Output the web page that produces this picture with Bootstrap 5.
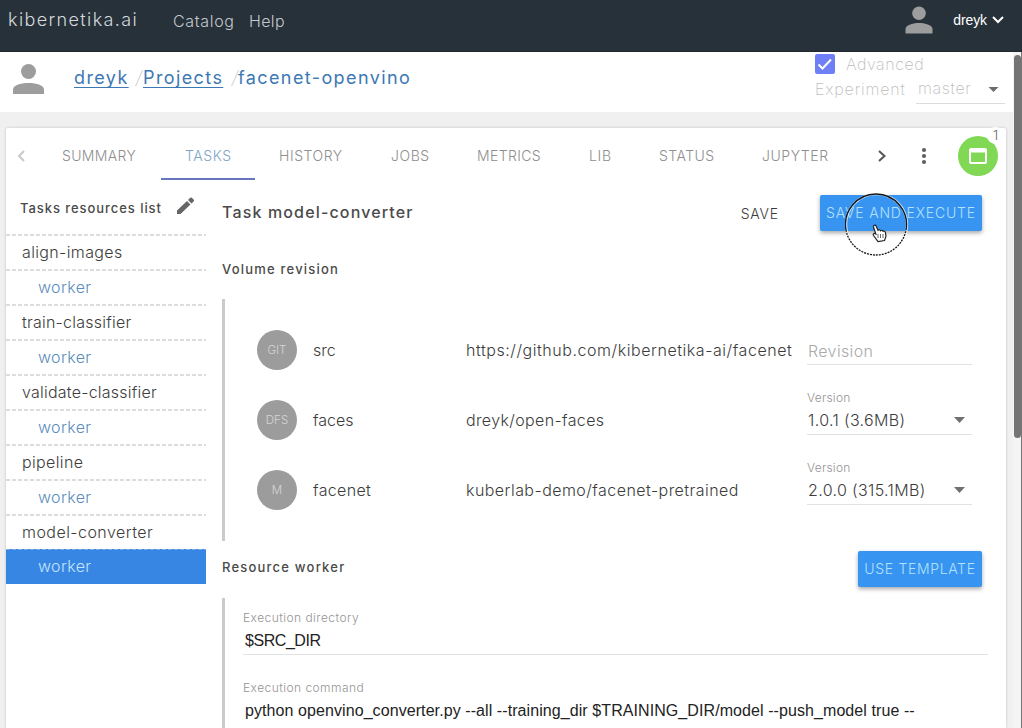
<!DOCTYPE html>
<html lang="en">
<head>
<meta charset="utf-8">
<meta name="viewport" content="width=device-width, initial-scale=1">
<title>kibernetika.ai</title>
<link rel="stylesheet" href="https://cdn.jsdelivr.net/npm/bootstrap@5.3.0/dist/css/bootstrap.min.css">
<style>
html,body{height:728px;overflow:hidden}
body{background:#f0f0f0;font:300 16px/20px "Inter",sans-serif;color:#3c3c3c}
.t0{letter-spacing:0}.t2{letter-spacing:.23px}.t3{letter-spacing:.36px}.t4{letter-spacing:.45px}.t5{letter-spacing:.55px}.t6{letter-spacing:.66px}.t8{letter-spacing:.82px}.t12{letter-spacing:1.4px}
svg{display:block;flex:none}
.topbar{height:52px;background:#27313a;color:#d5d9dc;padding:0 17px 0 8px;border-bottom:1px solid #202930}
.brandname{font-size:18px;letter-spacing:1.38px;width:165px;line-height:39px;height:51px}
.toplink{line-height:42px;height:51px;color:#c3c8cc}
.username{font:400 14px/20px "Liberation Sans",Arial,sans-serif;color:#fff;letter-spacing:-.1px}
.subhead{height:60px;background:#fff}
.crumbs{font-size:18px;line-height:22px;font-weight:400;color:#3c78b4}
.crumbs a{color:inherit;text-decoration:underline;text-decoration-thickness:1px;text-underline-offset:3px;text-decoration-skip-ink:none}
.crumbs i{font-weight:200;font-style:normal;color:#c4c4c4;width:9px;display:inline-block;transform:skewX(-10deg)}
.advanced{color:#bdbdbd;margin-left:815px;width:191px;font-weight:200}
.checkmark{width:20px;height:20px;background:#6f7ff5;border-radius:2px}
.branch{width:89px;height:28px;border-bottom:1px solid #dcdcdc;padding:0 6px 0 2px}
.panel{margin:16px 16px 0 6px;background:#fff;height:600px;border-radius:2px 2px 0 0;box-shadow:0 0 3px rgba(0,0,0,.2);overflow:visible}
.tabbar{height:52px;font-size:14px;line-height:20px;color:#8e8e8e}
.tabbar .tab{height:52px;padding:18px 0 0 24px;border-bottom:2px solid transparent}
.tabbar .tab.on{color:#7fa6c6;border-color:#6675bd}
.alertbtn{width:40px;height:40px;border-radius:50%;background:#80d855}
.notice{top:-9px;right:-6px;width:17px;height:17px;border-radius:50%;background:#fff;font-size:13px;line-height:17px;color:#666}
.side{width:200px}
.sidehead{height:54px;font-size:13px;font-weight:500;color:#4a4a4a;letter-spacing:.94px;padding:0 0 0 14px}
.res,.wrk{height:35px;line-height:36px;background:repeating-linear-gradient(90deg,#dcdcdc 0 4px,transparent 4px 6px) 0 0/100% 2px no-repeat;padding-left:16px}
.wrk{padding-left:32px;color:#5a8dbb}
.wrk.sel{background:repeating-linear-gradient(90deg,#79aee8 0 4px,#3886e4 4px 6px) 0 0/100% 1px no-repeat #3886e4;border-top:1px solid #fff;background-clip:padding-box;line-height:34px;color:#c3e4fb;margin-top:-1px;height:36px}
.main{width:767px;margin-left:16px;height:548px;overflow:hidden}
.heading{font-weight:500;letter-spacing:1.15px;color:#4a4a4a}
.subheading{font-weight:500;font-size:13px;line-height:20px;color:#4a4a4a;letter-spacing:1.21px}
.raised{height:36px;padding:0;line-height:34px;font-size:14px;font-weight:300;background:#3794f1;color:#b4e1fb;border:0;border-radius:2px;box-shadow:0 2px 4px rgba(0,0,0,.35)}
.raised:hover{background:#3794f1;color:#b4e1fb}
.rail{border-left:3px solid #cbcbcb}
.vol{height:70px}
.dot{width:40px;height:40px;border-radius:50%;background:#9c9c9c;color:#d6d6d6;font-size:11.5px;flex:none;margin:0 16px 0 32px}
.vname{width:153px;flex:none}.vpath{width:341px;flex:none;white-space:nowrap}
.pick{width:165px;height:50px;border-bottom:1px solid #e2e2e2;flex:none;margin-top:-20px}
.tag{font-size:12px;line-height:16px;color:#949494}
.entry{width:745px;height:45px;border-bottom:1px solid #e2e2e2;margin-bottom:25px}
.entry .val{display:block;font:400 16px/20px "Liberation Sans",Arial,sans-serif;color:#222;padding:5px 0 0 2px;white-space:nowrap}
.scroller{right:0;top:52px;width:9px;height:676px;background:#f4f4f4;border-right:1px solid #777}
.thumb{width:7px;height:383px;margin:3px 0 0 1px;border-radius:4px;background:#747474}
.pointer{left:845px;top:193px;pointer-events:none}
</style>
</head>
<body>
<header class="topbar d-flex align-items-start">
  <div class="brandname">kibernetika.ai</div>
  <a class="toplink text-decoration-none t6" style="width:76px">Catalog</a>
  <a class="toplink text-decoration-none t3">Help</a>
  <div class="d-flex align-items-center ms-auto" style="height:40px">
    <svg width="28" height="28" viewBox="0 0 28 28" fill="#9d9d9d"><circle cx="14" cy="7.3" r="6.8"/><path d="M.5 27.5V23C.5 19.5 7 17 14 17s13.500 2.500 13.500 6v4.500z"/></svg>
    <span class="username ms-3 ps-1">dreyk</span>
    <svg class="ms-1" width="14" height="10" viewBox="0 0 14 10" fill="none" stroke="#fff" stroke-width="2"><path d="M2 2l5 5 5-5"/></svg>
  </div>
</header>
<section class="subhead d-flex position-relative">
  <svg style="margin:12px 0 0 13px" width="31" height="31" viewBox="0 0 31 31" fill="#9d9d9d"><circle cx="15.500" cy="7.500" r="7.500"/><path d="M0 30v-4.500C0 21.500 7 19 15.500 19S31 21.500 31 25.500V30z"/></svg>
  <nav class="crumbs d-flex" style="margin:15px 0 0 30px"><a class="t12" style="width:54px">dreyk</a><i style="margin-left:6px">/</i><a class="t12" style="width:80px">Projects</a><i style="margin-left:7px">/</i><span class="t12" style="margin-left:-1px">facenet-openvino</span></nav>
  <div class="advanced position-absolute top-0 start-0">
    <div class="d-flex align-items-center" style="height:24px"><span class="checkmark"><svg width="20" height="20" viewBox="0 0 20 20" fill="none" stroke="#fff" stroke-width="2"><path d="M3.500 10.500l4 4 8.500-9"/></svg></span><span class="t5" style="margin-left:11px">Advanced</span></div>
    <div class="d-flex"><span class="t8" style="width:101px;line-height:26px">Experiment</span><span class="branch d-flex align-items-center justify-content-between t6"><span style="margin-top:-3px">master</span><svg width="11" height="7" fill="#6c6c6c"><path d="M.5 1h10l-5 5z"/></svg></span></div>
  </div>
</section>
<main class="panel">
  <nav class="tabbar d-flex">
    <svg style="margin:21px 8px 0 11px" width="8" height="14" fill="none" stroke="#c8c8c8" stroke-width="2"><path d="M7 2L2 7l5 5"/></svg>
    <span class="tab t3" style="width:122px;margin-left:5px">SUMMARY</span>
    <span class="tab on t5" style="width:94px;margin-left:1px">TASKS</span>
    <span class="tab t5" style="width:112px">HISTORY</span>
    <span class="tab t5" style="width:86px">JOBS</span>
    <span class="tab t3" style="width:112px">METRICS</span>
    <span class="tab t6" style="width:70px">LIB</span>
    <span class="tab t4" style="width:103px">STATUS</span>
    <span class="tab t5" style="width:113px">JUPYTER</span>
    <svg style="margin:21px 0 0 26px" width="10" height="14" fill="none" stroke="#555" stroke-width="2"><path d="M2 2l5.500 5L2 12"/></svg>
    <svg style="margin:19px 0 0 34px" width="6" height="18" fill="#606060"><circle cx="3" cy="3" r="2.100"/><circle cx="3" cy="9" r="2.100"/><circle cx="3" cy="15" r="2.100"/></svg>
    <span class="alertbtn position-relative" style="margin:8px 0 0 31px"><svg style="margin:12px 0 0 11px" width="18" height="16" fill="none" stroke="#fff" stroke-width="2"><rect x="1" y="1" width="16" height="14" rx="1"/><path d="M1 3h16" stroke-width="3"/></svg><span class="notice position-absolute text-center">1</span></span>
  </nav>
  <div class="d-flex">
    <aside class="side">
      <div class="sidehead d-flex"><span style="line-height:56px;width:156px">Tasks resources list</span><svg style="margin-top:17px" width="19" height="18" viewBox="0 0 19 18" fill="#666"><path d="M1 17v-3.500L11 4l3.500 3.500L4.500 17zM12 3l2.200-2.200q.8-.7 1.600 0l2 2q.7.700 0 1.400L15.500 6.500z"/></svg></div>
      <div class="res t3">align-images</div><div class="wrk t3">worker</div>
      <div class="res t2">train-classifier</div><div class="wrk t3">worker</div>
      <div class="res t2">validate-classifier</div><div class="wrk t3">worker</div>
      <div class="res t3">pipeline</div><div class="wrk t3">worker</div>
      <div class="res t4">model-converter</div><div class="wrk sel t3">worker</div>
    </aside>
    <section class="main">
      <div class="d-flex align-items-start" style="height:79px;padding-top:15px">
        <h1 class="heading fs-6 m-0" style="line-height:34px">Task model-converter</h1>
        <span class="ms-auto t8" style="font-size:14px;line-height:37px;margin-right:41px">SAVE</span>
        <button class="btn raised t8" style="width:162px;margin-right:7px;line-height:36px">SAVE AND EXECUTE</button>
      </div>
      <h2 class="subheading m-0">Volume revision</h2>
      <div class="rail" style="height:242px;margin-top:20px;padding-top:16px">
        <div class="vol d-flex align-items-center"><span class="dot d-flex align-items-center justify-content-center">GIT</span><span class="vname t0">src</span><span class="vpath t5">https://github.com/kibernetika-ai/facenet</span><div class="pick" style="padding:26px 0 0 1px"><span class="t3" style="color:#aaa">Revision</span></div></div>
        <div class="vol d-flex align-items-center"><span class="dot d-flex align-items-center justify-content-center">DFS</span><span class="vname t0">faces</span><span class="vpath t3">dreyk/open-faces</span><div class="pick"><div class="tag t2" style="padding-top:5px">Version</div><div class="d-flex align-items-center justify-content-between t3" style="padding:4px 7px 0 1px">1.0.1 (3.6MB)<svg width="11" height="6" fill="#707070"><path d="M0 0h11L5.500 6z"/></svg></div></div></div>
        <div class="vol d-flex align-items-center"><span class="dot d-flex align-items-center justify-content-center">M</span><span class="vname t3">facenet</span><span class="vpath t4">kuberlab-demo/facenet-pretrained</span><div class="pick"><div class="tag t2" style="padding-top:5px">Version</div><div class="d-flex align-items-center justify-content-between t3" style="padding:4px 7px 0 1px">2.0.0 (315.1MB)<svg width="11" height="6" fill="#707070"><path d="M0 0h11L5.500 6z"/></svg></div></div></div>
      </div>
      <div class="d-flex justify-content-between" style="height:57px;padding-top:10px">
        <h2 class="subheading m-0" style="padding-top:6px">Resource worker</h2>
        <button class="btn raised t6" style="width:124px;margin-right:7px;line-height:36px">USE TEMPLATE</button>
      </div>
      <div class="rail" style="height:130px;padding:12px 0 0 18px">
        <div class="entry"><span class="tag t4 d-block">Execution directory</span><span class="val" style="letter-spacing:-.45px">$SRC_DIR</span></div>
        <div class="entry m-0 border-0"><span class="tag t4 d-block">Execution command</span><span class="val" style="letter-spacing:.08px">python openvino_converter.py --all --training_dir $TRAINING_DIR/model --push_model true --</span></div>
      </div>
    </section>
  </div>
</main>
<div class="scroller position-absolute"><div class="thumb"></div></div>
<svg class="pointer position-absolute" width="64" height="64" viewBox="0 0 64 64" fill="none"><circle cx="31.500" cy="31.500" r="30.500" stroke="#fff" stroke-width="2.500" opacity=".7"/><path d="M1 37a30.500 30.500 0 1 1 60 0" stroke="#161616" stroke-width="1.300"/><path d="M1 37a30.500 30.500 0 0 0 60 0" stroke="#161616" stroke-width="1.300" stroke-dasharray="2 1"/><path d="M28.500 34c-.5-2 2-2.500 2.700-.8l1.800 4c1-.8 2-.5 2.500.5 1-.8 2.200-.4 2.600.6 1.300-.5 2.200.2 2.400 1.500l.5 3.500-1.500 4.200-6.500 1-4.500-6c-1-1.800.5-2.600 2.300-1.500z" fill="#fff" stroke="#222" stroke-width="1.200"/><path d="M33 41v4M35.500 41v4M38 41v4" stroke="#444" stroke-width=".8"/></svg>
<script src="https://cdn.jsdelivr.net/npm/bootstrap@5.3.0/dist/js/bootstrap.bundle.min.js"></script>
</body>
</html>
